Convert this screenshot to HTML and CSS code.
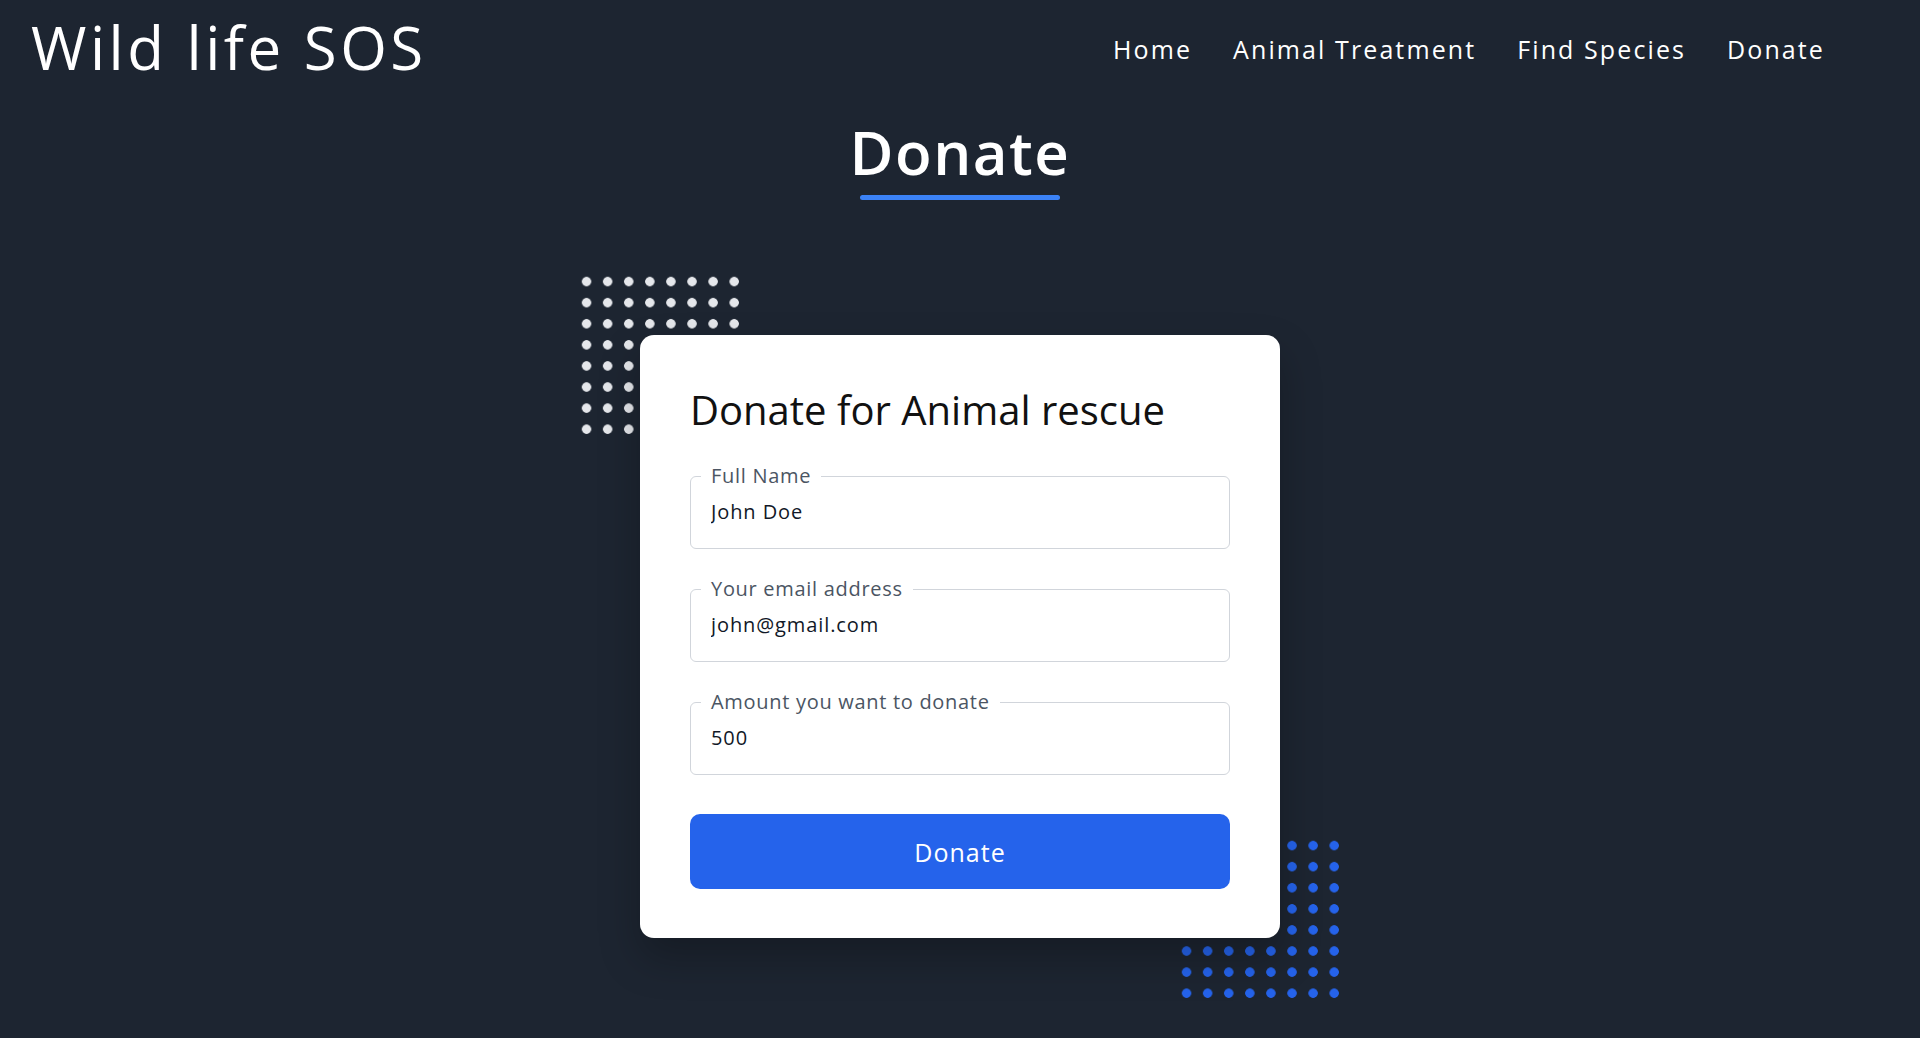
FILE: index.html
```html
<!DOCTYPE html>
<html lang="en">
<head>
    <meta charset="UTF-8">
    <meta name="viewport" content="width=device-width, initial-scale=1.0">
    <title>Wild life SOS - Donate</title>
    <link rel="stylesheet" href="styles.css">
</head>
<body>
    <header class="navbar">
        <div class="logo">Wild life SOS</div>
        <nav>
            <ul class="nav-links">
                <li><a href="#">Home</a></li>
                <li><a href="#">Animal Treatment</a></li>
                <li><a href="#">Find Species</a></li>
                <li><a href="#">Donate</a></li>
            </ul>
        </nav>
    </header>

    <main>
        <h1 class="page-title">Donate</h1>

        <section class="donate-area">
            <div class="dots dots-white"></div>
            <div class="dots dots-blue"></div>

            <form class="donate-card" id="donateForm">
                <h2>Donate for Animal rescue</h2>

                <fieldset class="field">
                    <legend>Full Name</legend>
                    <input type="text" name="name" value="John Doe">
                </fieldset>

                <fieldset class="field">
                    <legend>Your email address</legend>
                    <input type="email" name="email" value="john@gmail.com">
                </fieldset>

                <fieldset class="field">
                    <legend>Amount you want to donate</legend>
                    <input type="number" name="amount" value="500">
                </fieldset>

                <button type="submit">Donate</button>
            </form>
        </section>
    </main>
</body>
</html>
```

FILE: styles.css
```css
/* General */
html {
    background-color: #1d2531;
}

body {
    margin: 0;
    padding: 0;
    min-height: 1038px;
    background-color: #1d2531;
    color: #fff;
    font-family: "Open Sans", "Liberation Sans", sans-serif;
    overflow: hidden;
}

/* Navbar */
.navbar {
    display: flex;
    justify-content: space-between;
    align-items: flex-start;
    padding: 17px 95px 0 31px;
}

.logo {
    font-size: 60px;
    line-height: 60px;
    letter-spacing: 3.5px;
}

.nav-links {
    display: flex;
    gap: 41px;
    list-style: none;
    margin: 17px 0 0;
    padding: 0;
}

.nav-links a {
    color: #fff;
    text-decoration: none;
    font-size: 25px;
    line-height: 30px;
    letter-spacing: 2.1px;
}

/* Page title */
.page-title {
    margin: 45px 0 0;
    text-align: center;
    font-size: 60px;
    line-height: 60px;
    font-weight: 600;
    letter-spacing: 1.5px;
}

.page-title::after {
    content: "";
    display: block;
    width: 200px;
    height: 5px;
    margin: 13px auto 0;
    border-radius: 3px;
    background: #3b82f6;
}

/* Donate card */
.donate-area {
    position: relative;
    width: 640px;
    margin: 135px auto 0;
}

.dots {
    position: absolute;
    width: 168.8px;
    height: 168.8px;
    background-size: 21.1px 21.1px;
    z-index: 0;
}

.dots-white {
    left: -64.5px;
    top: -64.5px;
    background-image: radial-gradient(circle, #e5e7eb 4.3px, transparent 5px);
}

.dots-blue {
    right: -64.5px;
    top: 499.5px;
    background-image: radial-gradient(circle, #2563eb 4.3px, transparent 5px);
}

.donate-card {
    position: relative;
    z-index: 1;
    box-sizing: border-box;
    width: 640px;
    padding: 51px 50px 49px;
    background: #fff;
    border-radius: 14px;
    box-shadow: 0 20px 40px rgba(0, 0, 0, 0.25);
}

.donate-card h2 {
    margin: 0 0 30px;
    color: #111;
    font-size: 40px;
    line-height: 48px;
    font-weight: 400;
}

/* Fields */
.field {
    margin: 0 0 28px;
    padding: 12px 20px 24px;
    border: 1px solid #d1d5db;
    border-radius: 6px;
}

.field legend {
    margin-left: -10px;
    padding: 0 10px;
    color: #4b5563;
    font-size: 20px;
    line-height: 24px;
    letter-spacing: 0.7px;
}

.field input {
    display: block;
    width: 100%;
    height: 24px;
    padding: 0;
    border: none;
    outline: none;
    background: transparent;
    color: #111827;
    font-family: inherit;
    font-size: 20px;
    line-height: 24px;
    letter-spacing: 0.9px;
}

.field input::-webkit-outer-spin-button,
.field input::-webkit-inner-spin-button {
    -webkit-appearance: none;
    margin: 0;
}

.donate-card button {
    display: block;
    width: 100%;
    height: 75px;
    margin-top: 39px;
    border: none;
    border-radius: 10px;
    background: #2563eb;
    color: #fff;
    font-family: inherit;
    font-size: 25px;
    letter-spacing: 1px;
    cursor: pointer;
}

.donate-card button:hover {
    background: #1d4ed8;
}
```
